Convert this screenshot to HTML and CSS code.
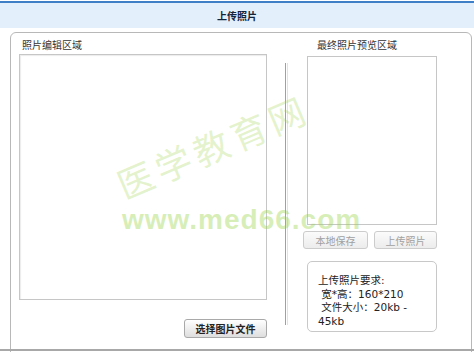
FILE: index.html
```html
<!DOCTYPE html>
<html lang="zh-CN">
<head>
    <meta charset="UTF-8">
    <meta name="viewport" content="width=device-width, initial-scale=1.0">
    <title>上传照片</title>
    <link rel="stylesheet" href="styles.css">
</head>
<body>
    <div class="window">
        <div class="title-bar">上传照片</div>
        <div class="panel">
            <div class="edit-col">
                <div class="label">照片编辑区域</div>
                <div class="edit-box"></div>
                <div class="edit-actions">
                    <button type="button" class="btn btn-bold">选择图片文件</button>
                </div>
            </div>
            <div class="divider"></div>
            <div class="preview-col">
                <div class="label preview-label">最终照片预览区域</div>
                <div class="preview-box"></div>
                <div class="preview-actions">
                    <button type="button" class="btn btn-save" disabled>本地保存</button>
                    <button type="button" class="btn btn-upload" disabled>上传照片</button>
                </div>
                <div class="notice">上传照片要求:<br>&nbsp;宽*高：160*210<br>&nbsp;文件大小：20kb - 45kb</div>
            </div>
        </div>
        <div class="watermark wm-name">医学教育网</div>
        <div class="watermark wm-url">www.med66.com</div>
    </div>
</body>
</html>
```

FILE: styles.css
```css
body {
    margin: 0;
    background-color: #ffffff;
    font-family: "Noto Sans CJK SC", "DejaVu Sans", sans-serif;
    color: #333333;
}
.window {
    position: relative;
    width: 474px;
    height: 352px;
    overflow: hidden;
}
.window::after {
    content: "";
    position: absolute;
    left: 0;
    right: 0;
    top: 349px;
    height: 2px;
    background-color: #a8a8a8;
}
.title-bar {
    margin-top: 1px;
    border-top: 2px solid #3f7fc6;
    height: 25px;
    line-height: 25px;
    background-color: #e3effb;
    text-align: center;
    font-size: 10px;
    font-weight: bold;
    color: #14243a;
}
.panel {
    display: flex;
    margin: 4px 0 0 10px;
    width: 462px;
    height: 340px;
    box-sizing: border-box;
    border: 1px solid #b8b8b8;
    border-radius: 6px;
    padding-top: 5px;
}
.label {
    height: 14px;
    line-height: 14px;
    font-size: 10px;
    color: #333333;
    padding-left: 3px;
}
.edit-col {
    margin-left: 8px;
    width: 248px;
}
.edit-box {
    margin-top: 2px;
    height: 246px;
    box-sizing: border-box;
    border: 1px solid #c6c6c6;
    box-shadow: inset 1px 1px 1px #ececec;
}
.edit-actions {
    margin-top: 14px;
    text-align: right;
}
.btn {
    height: 19px;
    box-sizing: border-box;
    padding: 0;
    border: 1px solid #a9a9a9;
    border-radius: 3px;
    background: linear-gradient(#ffffff, #dedede);
    font-family: "Noto Sans CJK SC", sans-serif;
    font-size: 10px;
    line-height: 17px;
    color: #222222;
}
.btn-bold {
    width: 83px;
    font-weight: bold;
}
.btn:disabled {
    color: #a0a0a0;
    border-color: #cccccc;
    background: linear-gradient(#fbfbfb, #ececec);
}
.divider {
    margin: 25px 0 0 18px;
    width: 1px;
    height: 262px;
    border-left: 1px solid #a0a0a0;
    border-right: 1px solid #e2e2e2;
}
.preview-col {
    margin-left: 19px;
    width: 130px;
}
.preview-label {
    padding-left: 10px;
}
.preview-box {
    margin-top: 4px;
    height: 169px;
    box-sizing: border-box;
    border: 1px solid #c6c6c6;
}
.preview-actions {
    display: flex;
    gap: 6px;
    margin: 6px 0 0 -4px;
}
.btn-save {
    width: 68px;
    height: 18px;
}
.btn-upload {
    width: 66px;
    height: 18px;
}
.notice {
    margin-top: 12px;
    height: 71px;
    box-sizing: border-box;
    border: 1px solid #c8c8c8;
    border-radius: 5px;
    padding: 12px 12px 0 10px;
    font-family: "DejaVu Sans", "Noto Sans CJK SC", sans-serif;
    font-size: 10.5px;
    line-height: 13.5px;
    color: #222222;
}
.watermark {
    position: absolute;
    pointer-events: none;
    white-space: nowrap;
}
.wm-name {
    left: 110px;
    top: 120px;
    font-family: "Noto Sans CJK SC", sans-serif;
    font-size: 36px;
    line-height: 50px;
    letter-spacing: 5px;
    color: rgba(160, 215, 80, 0.3);
    transform: rotate(-23deg);
}
.wm-url {
    left: 122px;
    top: 206px;
    font-family: "Liberation Sans", sans-serif;
    font-size: 28px;
    font-weight: bold;
    line-height: 28px;
    letter-spacing: 1px;
    color: rgba(150, 212, 70, 0.4);
}
```
